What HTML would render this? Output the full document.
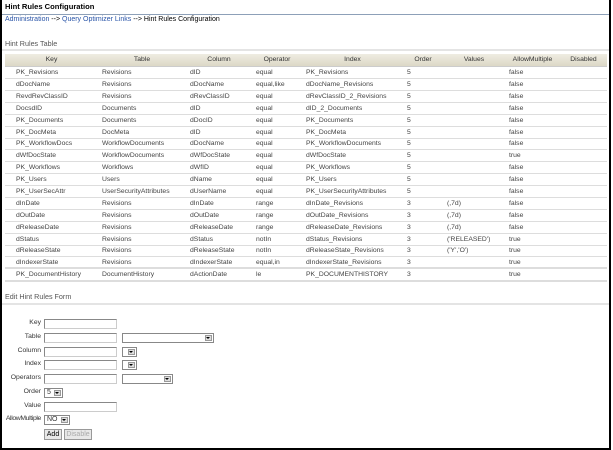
<!DOCTYPE html>
<html><head><meta charset="utf-8"><style>
*{margin:0;padding:0;box-sizing:border-box}
body{width:613px;height:450px;background:#fff;font-family:"Liberation Sans",sans-serif;font-size:6.8px;color:#333;position:relative;overflow:hidden}
.frame{position:absolute;left:0;top:0;width:611px;height:450px;border-left:2px solid #000;border-right:2px solid #000;border-bottom:2px solid #000}
.a{position:absolute;white-space:nowrap}
.title{left:5px;top:2px;font-weight:bold;font-size:7.6px;color:#000}
.tl{left:2px;top:14px;width:607px;height:1px;background:#8da0b8}
.bc{left:5px;top:16px;color:#000;font-size:7px}
.bc span{color:#2a55a8}
.sec{color:#555;font-size:7.2px}
.sl{height:2px;background:#e4e4e4;left:2px;width:607px}
.r{position:absolute;left:5px;width:602px;display:flex;height:12px;line-height:11px;border-bottom:1px solid #ddd;color:#444;white-space:nowrap}
.r.h{height:13px;line-height:12px;background:linear-gradient(#efece2,#dcd8c6);color:#333;border-bottom:1px solid #ccc}
.r.h>div{text-align:center;padding:0!important}
.r>div{overflow:hidden;padding-left:4px;flex:none}
.r>div:nth-child(1){width:93px;padding-left:11px}
.r>div:nth-child(2){width:88px}
.r>div:nth-child(3){width:66px}
.r>div:nth-child(4){width:50px}
.r>div:nth-child(5){width:101px}
.r>div:nth-child(6){width:40px}
.r>div:nth-child(7){width:62px}
.r>div:nth-child(8){width:55px}
.r>div:nth-child(9){width:47px}
.r.last{border-bottom:2px solid #ddd;height:13px}
.lab{position:absolute;right:572px;text-align:right;white-space:nowrap;color:#333}
.in{position:absolute;height:10px;border:1px solid #888;border-right-color:#ccc;border-bottom-color:#ccc;background:#fff}
.sel{position:absolute;height:10px;border:1px solid #888;background:#fff;font-size:7px;line-height:8px;padding-left:2px}
.sel:after{content:"";position:absolute;right:1px;top:1px;width:7px;height:6px;background:#ddd;border:1px solid #999;box-sizing:border-box}
.sel b{position:absolute;right:3px;top:3px;border-left:2px solid transparent;border-right:2px solid transparent;border-top:2px solid #000;z-index:2}
.btn{position:absolute;height:11px;border:1px solid #999;background:#e8e8e8;font-size:7px;line-height:9px;text-align:center}
</style></head><body>
<div class="frame"></div>
<div class="a title">Hint Rules Configuration</div>
<div class="a tl"></div>
<div class="a bc"><span>Administration</span> --&gt; <span>Query Optimizer Links</span> --&gt; Hint Rules Configuration</div>
<div class="a sec" style="left:5px;top:39px">Hint Rules Table</div>
<div class="a sl" style="top:49px"></div>
<div class="r h" style="top:54px"><div>Key</div><div>Table</div><div>Column</div><div>Operator</div><div>Index</div><div>Order</div><div>Values</div><div>AllowMultiple</div><div>Disabled</div></div>
<div class="r" style="top:67px"><div>PK_Revisions</div><div>Revisions</div><div>dID</div><div>equal</div><div>PK_Revisions</div><div>5</div><div></div><div>false</div><div></div></div>
<div class="r" style="top:79px"><div>dDocName</div><div>Revisions</div><div>dDocName</div><div>equal,like</div><div>dDocName_Revisions</div><div>5</div><div></div><div>false</div><div></div></div>
<div class="r" style="top:91px"><div>RevdRevClassID</div><div>Revisions</div><div>dRevClassID</div><div>equal</div><div>dRevClassID_2_Revisions</div><div>5</div><div></div><div>false</div><div></div></div>
<div class="r" style="top:103px"><div>DocsdID</div><div>Documents</div><div>dID</div><div>equal</div><div>dID_2_Documents</div><div>5</div><div></div><div>false</div><div></div></div>
<div class="r" style="top:115px"><div>PK_Documents</div><div>Documents</div><div>dDocID</div><div>equal</div><div>PK_Documents</div><div>5</div><div></div><div>false</div><div></div></div>
<div class="r" style="top:127px"><div>PK_DocMeta</div><div>DocMeta</div><div>dID</div><div>equal</div><div>PK_DocMeta</div><div>5</div><div></div><div>false</div><div></div></div>
<div class="r" style="top:138px"><div>PK_WorkflowDocs</div><div>WorkflowDocuments</div><div>dDocName</div><div>equal</div><div>PK_WorkflowDocuments</div><div>5</div><div></div><div>false</div><div></div></div>
<div class="r" style="top:150px"><div>dWfDocState</div><div>WorkflowDocuments</div><div>dWfDocState</div><div>equal</div><div>dWfDocState</div><div>5</div><div></div><div>true</div><div></div></div>
<div class="r" style="top:162px"><div>PK_Workflows</div><div>Workflows</div><div>dWfID</div><div>equal</div><div>PK_Workflows</div><div>5</div><div></div><div>false</div><div></div></div>
<div class="r" style="top:174px"><div>PK_Users</div><div>Users</div><div>dName</div><div>equal</div><div>PK_Users</div><div>5</div><div></div><div>false</div><div></div></div>
<div class="r" style="top:186px"><div>PK_UserSecAttr</div><div>UserSecurityAttributes</div><div>dUserName</div><div>equal</div><div>PK_UserSecurityAttributes</div><div>5</div><div></div><div>false</div><div></div></div>
<div class="r" style="top:198px"><div>dInDate</div><div>Revisions</div><div>dInDate</div><div>range</div><div>dInDate_Revisions</div><div>3</div><div>(,7d)</div><div>false</div><div></div></div>
<div class="r" style="top:210px"><div>dOutDate</div><div>Revisions</div><div>dOutDate</div><div>range</div><div>dOutDate_Revisions</div><div>3</div><div>(,7d)</div><div>false</div><div></div></div>
<div class="r" style="top:222px"><div>dReleaseDate</div><div>Revisions</div><div>dReleaseDate</div><div>range</div><div>dReleaseDate_Revisions</div><div>3</div><div>(,7d)</div><div>false</div><div></div></div>
<div class="r" style="top:234px"><div>dStatus</div><div>Revisions</div><div>dStatus</div><div>notIn</div><div>dStatus_Revisions</div><div>3</div><div>('RELEASED')</div><div>true</div><div></div></div>
<div class="r" style="top:245px"><div>dReleaseState</div><div>Revisions</div><div>dReleaseState</div><div>notIn</div><div>dReleaseState_Revisions</div><div>3</div><div>('Y','O')</div><div>true</div><div></div></div>
<div class="r" style="top:257px;border-bottom:2px solid #ddd"><div>dIndexerState</div><div>Revisions</div><div>dIndexerState</div><div>equal,in</div><div>dIndexerState_Revisions</div><div>3</div><div></div><div>true</div><div></div></div>
<div class="r last" style="top:269px"><div>PK_DocumentHistory</div><div>DocumentHistory</div><div>dActionDate</div><div>le</div><div>PK_DOCUMENTHISTORY</div><div>3</div><div></div><div>true</div><div></div></div>
<div class="a sec" style="left:5px;top:292px">Edit Hint Rules Form</div>
<div class="a sl" style="top:303px"></div>

<div class="lab" style="top:319px">Key</div><div class="in" style="left:44px;top:319px;width:73px"></div>
<div class="lab" style="top:333px">Table</div><div class="in" style="left:44px;top:333px;width:73px"></div><div class="sel" style="left:122px;top:333px;width:92px"><b></b></div>
<div class="lab" style="top:347px">Column</div><div class="in" style="left:44px;top:347px;width:73px"></div><div class="sel" style="left:122px;top:347px;width:15px"><b></b></div>
<div class="lab" style="top:360px">Index</div><div class="in" style="left:44px;top:360px;width:73px"></div><div class="sel" style="left:122px;top:360px;width:15px"><b></b></div>
<div class="lab" style="top:374px">Operators</div><div class="in" style="left:44px;top:374px;width:73px"></div><div class="sel" style="left:122px;top:374px;width:51px"><b></b></div>
<div class="lab" style="top:388px">Order</div><div class="sel" style="left:44px;top:388px;width:19px">5<b></b></div>
<div class="lab" style="top:402px">Value</div><div class="in" style="left:44px;top:402px;width:73px"></div>
<div class="lab" style="top:415px;letter-spacing:-0.35px">AllowMultiple</div><div class="sel" style="left:44px;top:415px;width:26px">NO<b></b></div>
<div class="btn" style="left:44px;top:429px;width:18px;color:#000">Add</div>
<div class="btn" style="left:64px;top:429px;width:28px;color:#aaa">Disable</div>
</body></html>
